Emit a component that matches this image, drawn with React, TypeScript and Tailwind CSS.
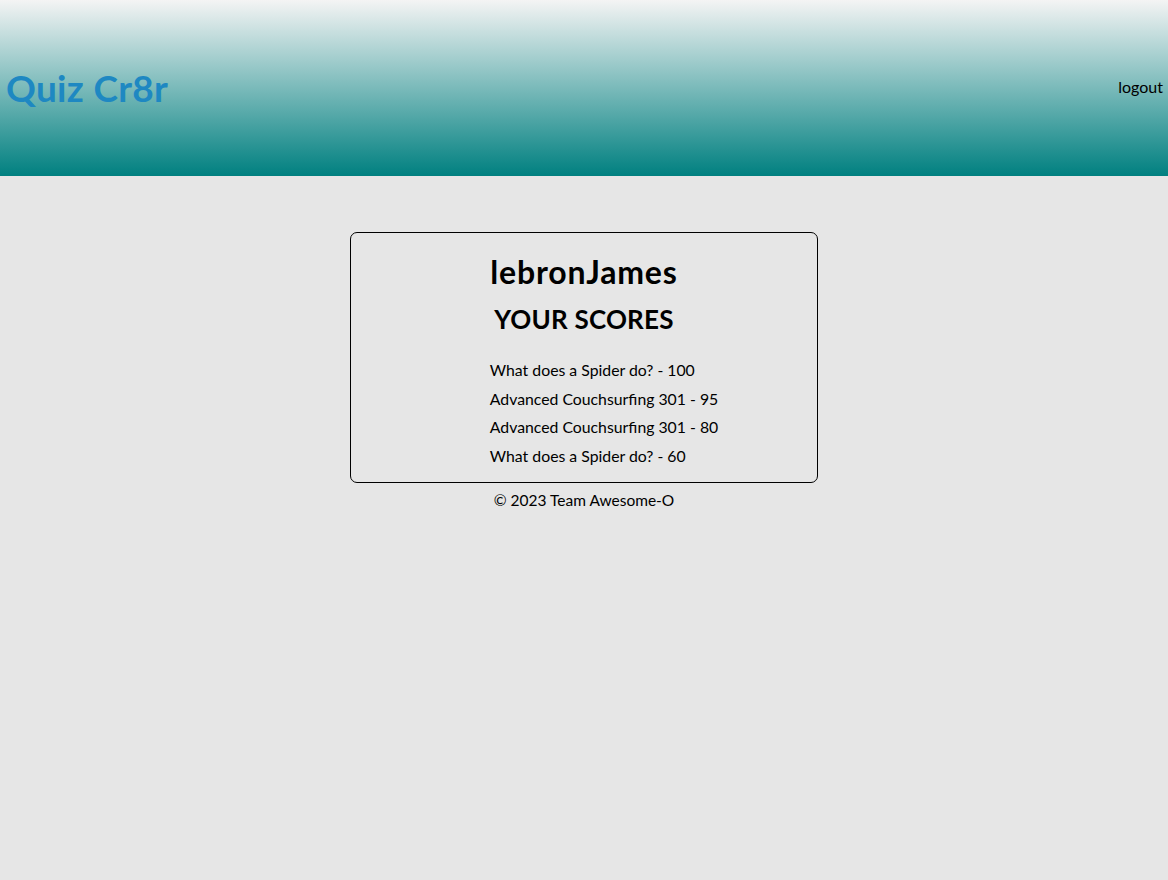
import React from "react";

const scores = [
  "What does a Spider do? - 100",
  "Advanced Couchsurfing 301 - 95",
  "Advanced Couchsurfing 301 - 80",
  "What does a Spider do? - 60",
];

export default function App() {
  return (
    <div
      className="min-h-[880px] bg-[#e6e6e6] text-black"
      style={{ fontFamily: '"Trebuchet MS", Lato, "Open Sans", sans-serif' }}
    >
      <header className="h-[176px] bg-linear-to-b/srgb from-[#f4f4f4] to-[#008080] flex items-center justify-between pl-[6px] pr-[5px]">
        <h1 className="text-[37px] font-bold text-[#1e88c2] leading-none -mt-[1px] tracking-[0.3px]">Quiz Cr8r</h1>
        <a className="text-[16px] leading-5 -mt-[2px]">logout</a>
      </header>
      <main className="flex flex-col items-center">
        <section className="mt-[56px] w-[468px] border border-black rounded-[7px] text-center pt-[20px] pb-[12px]">
          <h2 className="text-[32px] font-bold leading-[38px] tracking-[0.8px]">lebronJames</h2>
          <h3 className="mt-[12px] text-[26px] font-bold leading-[32px] tracking-[0.2px]">YOUR SCORES</h3>
          <ul className="mt-[21px] inline-block text-left pl-[40px]">
            {scores.map((s, i) => (
              <li key={i} className="text-[15.8px] leading-[28.5px]">{s}</li>
            ))}
          </ul>
        </section>
        <footer className="mt-[7px] text-[15.5px] leading-5">© 2023 Team Awesome-O</footer>
      </main>
    </div>
  );
}
